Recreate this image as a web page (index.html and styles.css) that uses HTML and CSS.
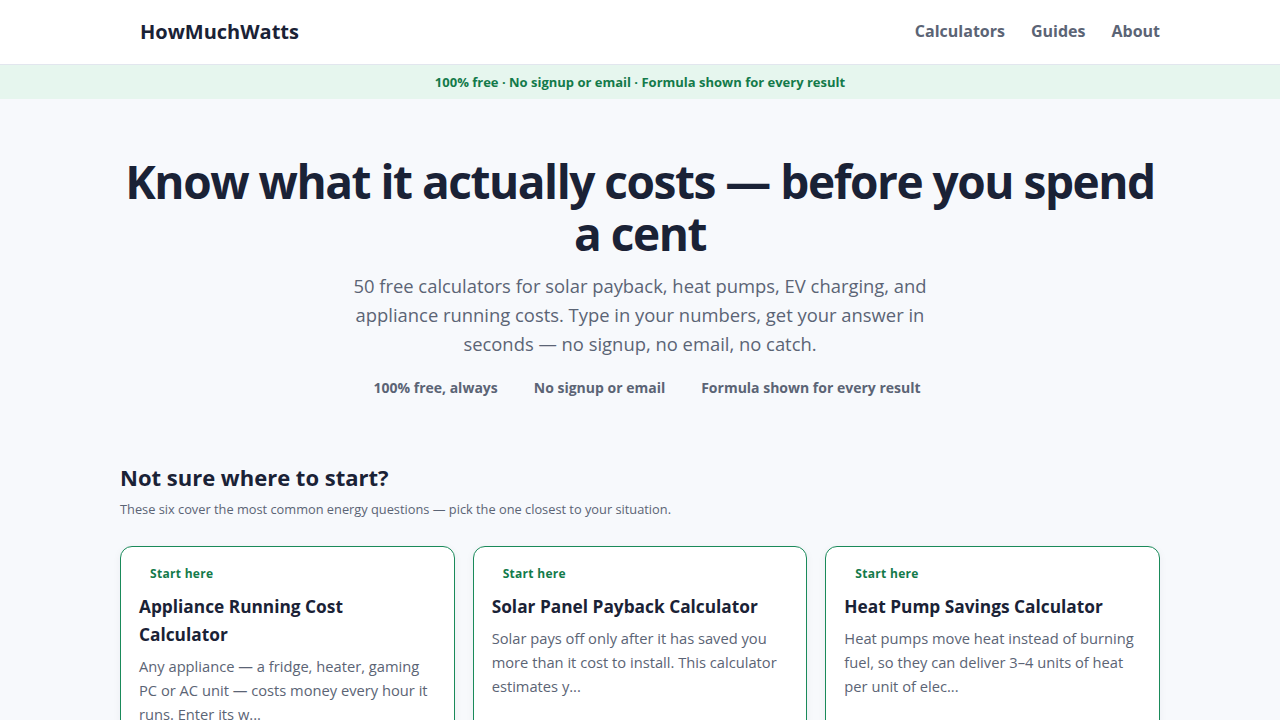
FILE: index.html
```html
<!DOCTYPE html>
<html lang="en">
<head>
    <meta charset="UTF-8">
    <meta name="viewport" content="width=device-width, initial-scale=1.0">
    <title>HowMuchWatts — Energy cost calculators</title>
    <link rel="stylesheet" href="styles.css">
</head>
<body>

    <header class="site-header">
        <div class="header-inner">
            <a class="logo" href="#">HowMuchWatts</a>
            <nav class="main-nav">
                <a href="#">Calculators</a>
                <a href="#">Guides</a>
                <a href="#">About</a>
            </nav>
        </div>
    </header>

    <div class="trust-bar">100% free · No signup or email · Formula shown for every result</div>

    <main>
        <section class="hero">
            <h1>Know what it actually costs — before you spend a cent</h1>
            <p class="hero-sub">50 free calculators for solar payback, heat pumps, EV charging, and appliance running costs. Type in your numbers, get your answer in seconds — no signup, no email, no catch.</p>
            <ul class="hero-points">
                <li>100% free, always</li>
                <li>No signup or email</li>
                <li>Formula shown for every result</li>
            </ul>
        </section>

        <section class="starters">
            <h2>Not sure where to start?</h2>
            <p class="section-sub">These six cover the most common energy questions — pick the one closest to your situation.</p>

            <div class="card-grid">
                <a class="card" href="#">
                    <span class="badge">Start here</span>
                    <h3>Appliance Running Cost Calculator</h3>
                    <p>Any appliance — a fridge, heater, gaming PC or AC unit — costs money every hour it runs. Enter its w...</p>
                </a>
                <a class="card" href="#">
                    <span class="badge">Start here</span>
                    <h3>Solar Panel Payback Calculator</h3>
                    <p>Solar pays off only after it has saved you more than it cost to install. This calculator estimates y...</p>
                </a>
                <a class="card" href="#">
                    <span class="badge">Start here</span>
                    <h3>Heat Pump Savings Calculator</h3>
                    <p>Heat pumps move heat instead of burning fuel, so they can deliver 3–4 units of heat per unit of elec...</p>
                </a>
            </div>
        </section>
    </main>

</body>
</html>
```

FILE: styles.css
```css
body {
    font-family: 'Open Sans', 'Noto Sans', sans-serif;
    background-color: #f7f9fc;
    color: #1a2236;
    margin: 0;
}

a {
    text-decoration: none;
    color: inherit;
}

.site-header {
    background-color: white;
    border-bottom: 1px solid #e2e6ee;
}

.header-inner {
    max-width: 1040px;
    margin: 0 auto;
    height: 64px;
    padding-bottom: 2px;
    box-sizing: border-box;
    display: flex;
    align-items: center;
    justify-content: space-between;
}

.logo {
    font-size: 20px;
    font-weight: 700;
    padding-left: 20px;
}

.main-nav {
    display: flex;
    gap: 26px;
}

.main-nav a {
    font-size: 16px;
    font-weight: 700;
    color: #5b6475;
}

.trust-bar {
    background-color: #e6f6ee;
    color: #137a4a;
    font-size: 13px;
    font-weight: 700;
    text-align: center;
    height: 34px;
    line-height: 34px;
}

main {
    max-width: 1040px;
    margin: 0 auto;
}

.hero {
    text-align: center;
    padding: 56px 0 0;
}

.hero h1 {
    font-size: 46px;
    line-height: 52px;
    font-weight: 700;
    margin: 0;
    letter-spacing: -0.032em;
}

.hero-sub {
    font-size: 18.4px;
    line-height: 29px;
    color: #5b6475;
    max-width: 590px;
    margin: 12px auto 0;
}

.hero-points {
    list-style: none;
    padding: 0 0 0 14px;
    margin: 20px 0 0;
    display: flex;
    justify-content: center;
    gap: 36px;
    font-size: 14px;
    font-weight: 700;
    color: #5b6475;
}

.starters {
    padding-top: 65px;
}

.starters h2 {
    font-size: 22px;
    line-height: 30px;
    font-weight: 700;
    margin: 0;
}

.section-sub {
    font-size: 12.8px;
    color: #5b6475;
    margin: 8px 0 0;
}

.card-grid {
    display: grid;
    grid-template-columns: repeat(3, 1fr);
    gap: 18px;
    margin-top: 28px;
}

.card {
    background-color: white;
    border: 1px solid #1a8a5a;
    border-radius: 12px;
    padding: 14px 18px 20px;
    box-shadow: 0 2px 8px rgba(20, 30, 60, 0.05);
    min-height: 200px;
}

.badge {
    display: inline-block;
    font-size: 12px;
    font-weight: 700;
    color: #137a4a;
    padding: 2px 11px;
    letter-spacing: 0.3px;
}

.card h3 {
    font-size: 17.3px;
    line-height: 28px;
    font-weight: 700;
    margin: 9px 0 0;
}

.card p {
    font-size: 14.7px;
    line-height: 24px;
    color: #5b6475;
    margin: 5px 0 0;
}
```
